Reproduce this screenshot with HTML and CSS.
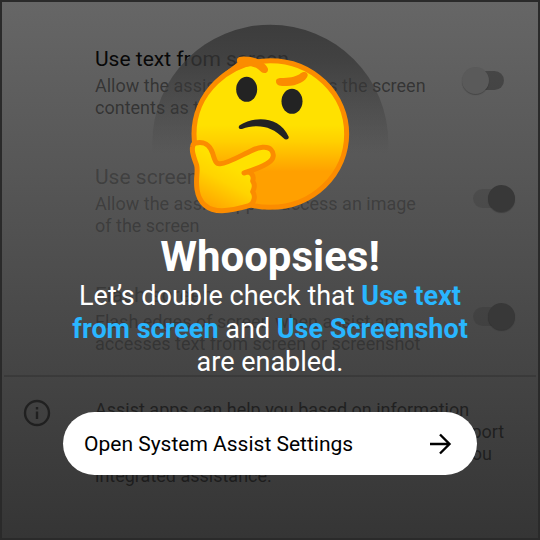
FILE: index.html
```html
<!DOCTYPE html>
<html lang="en">
<head>
<meta charset="utf-8">
<meta name="viewport" content="width=device-width, initial-scale=1">
<title>Assist settings</title>
<link rel="stylesheet" href="styles.css">
</head>
<body>
<div class="screen">
  <section class="settings">
    <div class="row row-active">
      <label class="row-text" for="use-text">
        <span class="row-title">Use text from screen</span>
        <span class="row-desc">Allow the assist app to access the screen contents as text</span>
      </label>
      <input class="switch" type="checkbox" id="use-text">
    </div>
    <div class="row">
      <label class="row-text" for="use-shot">
        <span class="row-title">Use screenshot</span>
        <span class="row-desc">Allow the assist app to access an image of the screen</span>
      </label>
      <input class="switch" type="checkbox" id="use-shot" checked>
    </div>
    <div class="row">
      <label class="row-text" for="flash">
        <span class="row-title">Flash screen</span>
        <span class="row-desc">Flash edges of screen when assist app accesses text from screen or screenshot</span>
      </label>
      <input class="switch" type="checkbox" id="flash" checked>
    </div>
    <div class="info">
      <svg class="info-icon" viewBox="0 0 28 28" aria-hidden="true">
        <circle cx="14" cy="14" r="12" fill="none" stroke="currentColor" stroke-width="2.4"/>
        <path d="M14 12.500v7.500M14 8v2.600" stroke="currentColor" stroke-width="2.400"/>
      </svg>
      <p class="info-text">Assist apps can help you based on information from the screen you’re viewing. Some apps support both launcher and voice input services to give you integrated assistance.</p>
    </div>
  </section>

  <main class="notice">
    <svg class="hero" viewBox="0 0 720 660" role="img" aria-label="Thinking face">
      <defs>
        <linearGradient id="halo" gradientUnits="userSpaceOnUse" x1="0" y1="44" x2="0" y2="430">
          <stop offset="0" stop-color="#383838" stop-opacity=".9"/>
          <stop offset=".3" stop-color="#383838" stop-opacity=".75"/>
          <stop offset="1" stop-color="#383838" stop-opacity="0"/>
        </linearGradient>
        <linearGradient id="face" gradientUnits="userSpaceOnUse" x1="0" y1="345" x2="0" y2="485">
          <stop offset="0" stop-color="#ffe100"/>
          <stop offset=".35" stop-color="#ffd000"/>
          <stop offset="1" stop-color="#ffa000"/>
        </linearGradient>
        <linearGradient id="hand" gradientUnits="userSpaceOnUse" x1="246" y1="468" x2="176" y2="600">
          <stop offset="0" stop-color="#ffe100"/>
          <stop offset=".35" stop-color="#ffd400"/>
          <stop offset="1" stop-color="#ffa000"/>
        </linearGradient>
      </defs>
      <path d="M7 430V398a354 354 0 0 1 708 0v32z" fill="url(#halo)"/>
      <ellipse cx="361" cy="372" rx="229" ry="220" fill="url(#face)" stroke="#fb8c00" stroke-width="15"/>
      <path d="M262 158C258 145 264 139 276 140C315 137 342 155 353 174C358 186 344 194 334 186C322 172 305 165 286 170L222 188Z" fill="#fb8c00"/>
      <path d="M378 212C380 203 392 204 401 204C424 203 440 200 452 190C462 182 475 186 473 197C469 212 440 229 408 228C393 228 377 228 378 212Z" fill="#fb8c00"/>
      <ellipse cx="290" cy="238" rx="31.500" ry="37.500" fill="#232323"/>
      <ellipse cx="426" cy="274" rx="31.500" ry="37.500" fill="#232323"/>
      <path d="M269 346C313 317 389 318 416 380C418 388 407 392 401 385C365 347 320 341 276 357C267 359 263 352 269 346Z" fill="#232323"/>
      <path d="M137 399C160 393 180 404 188 430C194 450 198 464 211 461C234 460 272 437 304 422C327 411 352 407 363 419C374 431 371 446 359 455C345 466 307 481 282 489C300 480 314 495 308 513C315 523 313 536 308 545C318 558 312 581 297 587C270 595 240 602 216 602C172 602 147 578 141 538C136 500 145 486 140 466C134 446 123 427 128 409C129 403 132 400 137 399Z" fill="url(#hand)" stroke="#fb8c00" stroke-width="15" stroke-linejoin="round"/>
    </svg>
    <h1 class="title">Whoopsies!</h1>
    <p class="message">Let’s double check that <strong>Use text from screen</strong> and <strong>Use Screenshot</strong> are enabled.</p>
    <button class="action" type="button">
      <span>Open System Assist Settings</span>
      <svg class="arrow" viewBox="0 0 24 24" aria-hidden="true">
        <path d="M2 12h19M12 2.500l9.500 9.500-9.500 9.500" fill="none" stroke="currentColor" stroke-width="2.400"/>
      </svg>
    </button>
  </main>
</div>
</body>
</html>
```
FILE: styles.css
```css
* {
  box-sizing: border-box;
}

body {
  margin: 0;
  font-family: Roboto, "Liberation Sans", sans-serif;
}

.screen {
  display: grid;
  grid-template-columns: minmax(0, 1fr);
  min-height: 100vh;
  border: 2px solid #2a2a2a;
  background: linear-gradient(#666, #353535);
}

/* The dimmed settings list and the notice share one grid cell. */
.settings,
.notice {
  grid-area: 1 / 1;
}

.settings {
  padding-top: 43px;
}

.row {
  display: flex;
  align-items: flex-start;
  height: 118px;
  padding: 0 23px 0 93px;
  color: rgba(0, 0, 0, 0.27);
}

.row-active {
  color: rgba(0, 0, 0, 0.46);
}

.row-active .row-title {
  color: #080808;
}

.row-text {
  flex: 1;
  padding-right: 30px;
}

.row-title,
.row-desc {
  display: block;
}

.row-title {
  margin-bottom: 2px;
  font-size: 21px;
  line-height: 28px;
}

.row-desc {
  font-size: 18px;
  line-height: 22px;
}

.switch {
  appearance: none;
  position: relative;
  flex: none;
  width: 53px;
  height: 27px;
  margin: 22px 0 0;
}

.switch::before {
  content: "";
  position: absolute;
  inset: 4px 11px;
  border-radius: 10px;
  background: rgba(0, 0, 0, 0.27);
}

.switch::after {
  content: "";
  position: absolute;
  top: 0;
  left: 0;
  width: 27px;
  height: 27px;
  border-radius: 50%;
  background: #5a5a5a;
  box-shadow: 0 1px 1px rgba(0, 0, 0, 0.25);
}

.switch:checked::before {
  background: rgba(0, 0, 0, 0.1);
}

.switch:checked::after {
  left: 26px;
  background: #383838;
}

.info {
  display: flex;
  gap: 44px;
  margin: -24px 2px 0;
  padding: 22px 28px 0 19px;
  border-top: 2px solid rgba(0, 0, 0, 0.14);
  color: rgba(0, 0, 0, 0.5);
}

.info-icon {
  flex: none;
  width: 28px;
  height: 28px;
}

.info-text {
  margin: 0;
  font-size: 18px;
  line-height: 22px;
}

.notice {
  display: flex;
  flex-direction: column;
  align-items: center;
  z-index: 1;
  padding: 8px 61px 0;
  color: #fff;
}

.hero {
  width: 240px;
  height: 220px;
}

.title {
  margin: 0;
  padding-top: 4px;
  font-size: 42px;
  font-weight: 700;
  line-height: 46px;
}

.message {
  max-width: 400px;
  margin: 0;
  font-size: 27px;
  line-height: 33px;
  text-align: center;
}

.message strong {
  font-weight: 700;
  color: #29b6ff;
}

.action {
  display: flex;
  align-items: center;
  justify-content: space-between;
  width: 100%;
  height: 63px;
  margin-top: 33px;
  padding: 0 25px 0 21px;
  border: 0;
  border-radius: 32px;
  background: #fff;
  color: #000;
  font-family: inherit;
  font-size: 21px;
}

.arrow {
  width: 24px;
  height: 24px;
}
```
